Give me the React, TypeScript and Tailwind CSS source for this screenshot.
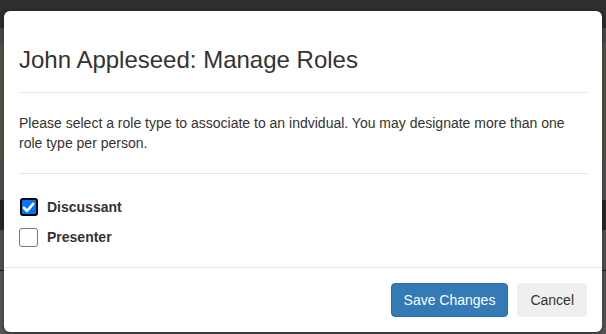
import React, { useState } from "react";

const roles = ["Discussant", "Presenter"];

function Box({ checked }: { checked: boolean }) {
  return (
    <span className="flex h-[19px] w-[19px] shrink-0 items-center justify-center">
      {checked ? (
        <span className="flex h-[18px] w-[18px] items-center justify-center rounded-[3px] border-2 border-black bg-[#0075ff]">
          <svg viewBox="0 0 14 14" className="h-[13px] w-[13px]">
            <path d="M2 7.3 L5.4 10.8 L12 3" fill="none" stroke="#fff" strokeWidth="2.8" strokeLinecap="round" strokeLinejoin="round" />
          </svg>
        </span>
      ) : (
        <span className="block h-[19px] w-[19px] rounded-[3px] border border-[#767676] bg-white" />
      )}
    </span>
  );
}

export default function App() {
  const [selected, setSelected] = useState<string[]>(["Discussant"]);

  const toggle = (r: string) =>
    setSelected((s) => (s.includes(r) ? s.filter((x) => x !== r) : [...s, r]));

  return (
    <div className="relative h-[334px] w-[606px] overflow-hidden font-['Liberation_Sans',Arial,sans-serif]">
      {/* dimmed page behind the dialog */}
      <div className="flex flex-col">
        <div className="h-[28px] bg-[#2f2f2f]" />
        <div className="h-[15px] bg-[#4f4f4f]" />
        <div className="h-[117px] bg-[#5d5a4c]" />
        <div className="h-[40px] bg-[#575757]" />
        <div className="h-[30px] bg-[#2b2b2b]" />
        <div className="h-[40px] bg-[#585858]" />
        <div className="h-px bg-[#222]" />
        <div className="h-[63px] bg-[#5c5c5c]" />
      </div>

      {/* dialog */}
      <div className="absolute left-[4px] top-[11px] w-[598px] rounded-[6px] bg-white text-[#333] shadow-[0_3px_9px_rgba(0,0,0,0.5)]">
        <div className="mx-[15px] border-b border-[#e5e5e5] pb-[15px] pt-[32px]">
          <h4 className="text-[24px] leading-[34px]">John Appleseed: Manage Roles</h4>
        </div>

        <div className="mx-[15px] border-b border-[#e5e5e5] py-[20px] text-[14px] leading-[20px]">
          Please select a role type to associate to an indvidual. You may designate more than one
          role type per person.
        </div>

        <div className="flex flex-col pb-[15px] pl-[15px] pt-[18px]">
          {roles.map((r) => (
            <label key={r} className="flex h-[30px] cursor-pointer items-center gap-[9px]" onClick={() => toggle(r)}>
              <Box checked={selected.includes(r)} />
              <span className="text-[14px] font-bold leading-[20px]">{r}</span>
            </label>
          ))}
        </div>

        <div className="flex justify-end gap-[9px] border-t border-[#e5e5e5] p-[15px]">
          <button className="h-[34px] rounded-[4px] border border-[#2e6da4] bg-[#337ab7] px-[12px] text-[14px] text-white">
            Save Changes
          </button>
          <button className="h-[34px] rounded-[4px] bg-[#efefef] px-[13px] text-[14px] text-[#333]">
            Cancel
          </button>
        </div>
      </div>
    </div>
  );
}
